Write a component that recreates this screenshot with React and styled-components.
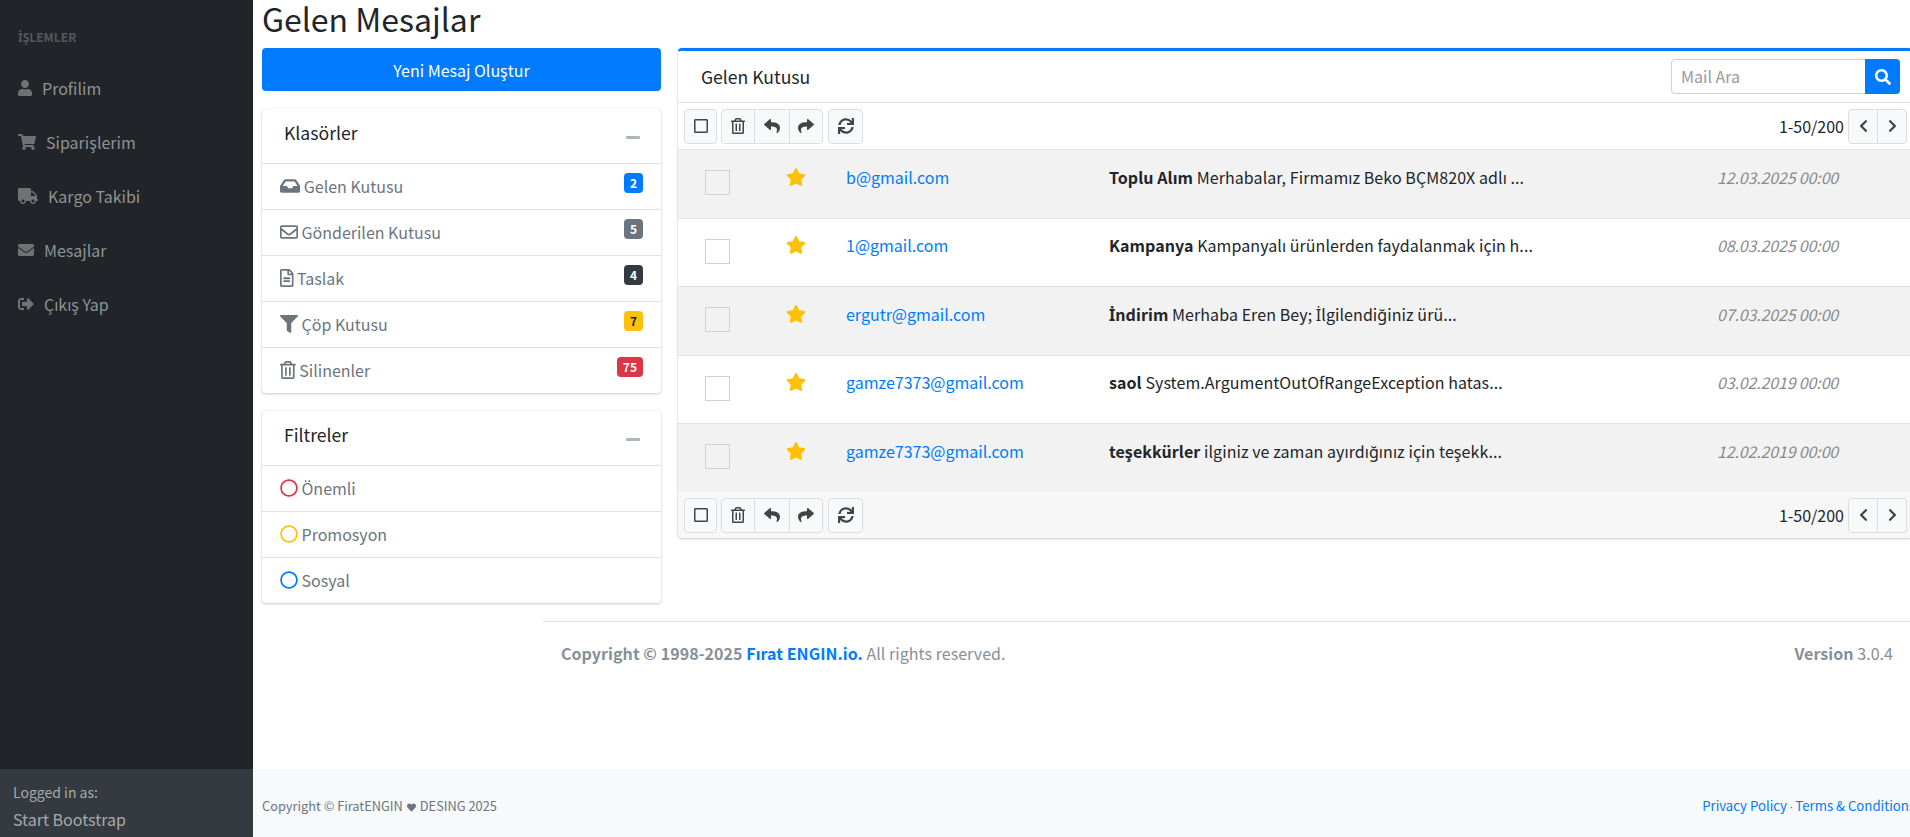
import React from 'react'
import styled, { createGlobalStyle } from 'styled-components'
import {
  FaUser, FaShoppingCart, FaTruck, FaEnvelope, FaSignOutAlt, FaInbox, FaRegEnvelope,
  FaRegFileAlt, FaFilter, FaRegTrashAlt, FaRegCircle, FaRegSquare, FaReply, FaShare,
  FaSync, FaChevronLeft, FaChevronRight, FaSearch, FaStar, FaHeart
} from 'react-icons/fa'

const GlobalStyle = createGlobalStyle`
  html, body { margin: 0; padding: 0; height: 100%; overflow: hidden; background: #fff; }
  body { font-family: "Noto Sans CJK SC", "Noto Sans", sans-serif; font-size: 16px; line-height: 24px; color: #212529; }
  * { box-sizing: border-box; }
`

const Page = styled.div`display: flex; width: 1910px; height: 837px; overflow: hidden;`

// react-icons forces 1em square, so each icon gets its real box here
const IconSlot = styled.span`
  display: inline-flex;
  flex: none;
  svg { width: ${p => p.$w}px; height: ${p => p.$h || 16}px; }
`

const Sidebar = styled.aside`
  width: 253px;
  flex: none;
  display: flex;
  flex-direction: column;
  background: #212529;
`
const SideNav = styled.nav`flex: 1; padding-top: 28px;`
const SideHeading = styled.div`
  padding-left: 18px;
  height: 18px;
  line-height: 18px;
  font-size: 12px;
  font-weight: 700;
  color: #55585c;
`
const SideLink = styled.a`
  display: flex;
  align-items: center;
  gap: 10px;
  height: 54px;
  padding-left: 18px;
  font-size: 16px;
  color: #909294;
  &:first-of-type { margin-top: 15px; }
  svg { color: #6f7173; }
`
const SideFooter = styled.div`
  height: 68px;
  flex: none;
  padding: 12px 13px 0;
  background: #343a40;
  color: #a6a9ab;
  font-size: 14px;
  line-height: 22px;
`
const SideUser = styled.div`font-size: 16px; line-height: 26px; margin-top: 3px;`

const Main = styled.div`flex: 1; min-width: 0; display: flex; flex-direction: column;`
const Content = styled.main`flex: 1; padding-left: 9px; min-height: 0;`
const Title = styled.h1`
  margin: 0;
  height: 48px;
  font-size: 32px;
  line-height: 36px;
  font-weight: 400;
  color: #212529;
  white-space: nowrap;
`
const Columns = styled.div`display: flex; gap: 17px; margin-right: -2px;`
const LeftColumn = styled.div`width: 399px; flex: none; display: flex; flex-direction: column;`
const ComposeButton = styled.button`
  height: 43px;
  border: 0;
  border-radius: 4px;
  background: #007bff;
  color: #fff;
  font: inherit;
  margin-bottom: 18px;
`
const Card = styled.section`
  background: #fff;
  border-radius: 4px;
  box-shadow: 0 0 1px rgba(0, 0, 0, .125), 0 1px 3px rgba(0, 0, 0, .2);
  margin-bottom: 18px;
`
const CardHeader = styled.header`
  height: 54px;
  display: flex;
  justify-content: space-between;
  padding: 12px 21px 0 22px;
  font-size: 17.6px;
  line-height: 24px;
`
const MinusMark = styled.span`
  width: 14px;
  height: 3px;
  margin-top: 15px;
  border-radius: 1px;
  background: #adb5bd;
`
const FolderRow = styled.a`
  position: relative;
  display: flex;
  align-items: center;
  gap: 3.5px;
  height: 46px;
  padding: 0 0 2px 18px;
  border-top: 1px solid #dee2e6;
  color: #6c757d;
`
const Badge = styled.span`
  position: absolute;
  right: 18px;
  top: 9px;
  min-width: 18px;
  height: 20px;
  padding: 0 6px;
  border-radius: 4px;
  background: ${p => p.$bg};
  color: ${p => p.$fg || '#fff'};
  font-size: 12px;
  line-height: 19px;
  font-weight: 700;
  text-align: center;
`
const CircleMark = styled(IconSlot)`color: ${p => p.$color};`

const Mailbox = styled(Card)`
  flex: 1;
  min-width: 0;
  border-top: 3px solid #007bff;
  margin: 0;
  align-self: flex-start;
`
const MailHeader = styled.header`
  height: 51px;
  display: flex;
  align-items: center;
  justify-content: space-between;
  padding: 0 12px 0 23px;
  font-size: 17.6px;
`
const SearchBox = styled.form`display: flex; height: 35px; margin: 0;`
const SearchInput = styled.input`
  width: 194px;
  height: 35px;
  padding: 0 9px 2px;
  border: 1px solid #ced4da;
  border-right: 0;
  border-radius: 4px 0 0 4px;
  font: inherit;
  font-size: 16px;
  outline: none;
  &::placeholder { color: #999; }
`
const SearchButton = styled.button`
  width: 35px;
  border: 0;
  border-radius: 0 4px 4px 0;
  background: #007bff;
  color: #fff;
  display: flex;
  align-items: center;
  justify-content: center;
`
const Toolbar = styled.div`
  height: ${p => p.$bottom ? '46px' : '47px'};
  display: flex;
  align-items: center;
  gap: 4px;
  padding: 0 5px 0 6px;
  border-top: ${p => p.$bottom ? '0' : '1px solid #dee2e6'};
  background: ${p => p.$bottom ? '#f7f7f8' : '#fff'};
  border-radius: ${p => p.$bottom ? '0 0 4px 4px' : '0'};
`
const ToolGroup = styled.div`display: flex; margin-left: ${p => p.$push || 0}px;`
const ToolButton = styled.button`
  width: ${p => p.$w || 34}px;
  height: 35px;
  padding: 0;
  display: flex;
  align-items: center;
  justify-content: center;
  background: #f8f9fa;
  border: 1px solid #ddd;
  color: #444;
  border-radius: 4px;
  & + & { margin-left: -1px; }
  ${ToolGroup} > &:not(:last-child) { border-top-right-radius: 0; border-bottom-right-radius: 0; }
  ${ToolGroup} > &:not(:first-child) { border-top-left-radius: 0; border-bottom-left-radius: 0; }
`
const Pager = styled.div`display: flex; align-items: center; gap: 4px; margin-left: auto;`

const RowCell = styled.div`padding-top: 15px; white-space: nowrap;`
const MailRow = styled.div`
  height: ${p => p.$odd ? 69 : 68}px;
  display: grid;
  grid-template-columns: 80.5px 60.5px 263px 609px 1fr;
  padding-left: 27px;
  border-top: 1px solid #dee2e6;
  background: ${p => p.$odd ? '#f2f2f2' : '#fff'};
  ${RowCell} { margin-top: ${p => p.$odd ? 0 : -1}px; }
`
const RowCheck = styled.span`
  width: 25px;
  height: 25px;
  margin-top: 20px;
  border: 1px solid #d5d0c8;
  background: ${p => p.$odd ? '#f2f2f2' : '#fff'};
`
const StarCell = styled(RowCell)`
  padding-top: 18px;
  color: #ffc107;
  line-height: 18px;
`
const MailLink = styled.a`color: #007bff;`
const Subject = styled(RowCell)`color: #212529; letter-spacing: .07px;`
const DateCell = styled(RowCell)`color: #8a8a8a; font-style: italic; letter-spacing: -.15px; margin-left: -1px;`
const DottedI = styled.span`font-family: "Noto Sans", sans-serif;`

const MainFooter = styled.footer`
  margin-left: 281px;
  border-top: 1px solid #dee2e6;
  display: flex;
  justify-content: space-between;
  padding: 19px 17px 0 18px;
  color: #869099;
  letter-spacing: .05px;
  b { font-weight: 700; }
`
const FooterLink = styled.a`color: #007bff; font-weight: 700;`

const PageFooter = styled.footer`
  height: 68px;
  flex: none;
  display: flex;
  align-items: center;
  justify-content: space-between;
  padding: 6px 0 0 9px;
  background: #f8f9fa;
  font-size: 12.8px;
  color: #6c757d;
  white-space: nowrap;
`
const HeartMark = styled.span`
  margin: 0 4px;
  svg { width: 9px; height: 9px; vertical-align: -1px; }
`
const LegalLinks = styled.div`
  margin-right: -5px;
  font-size: 13.2px;
  word-spacing: -1px;
  a { color: #007bff; word-spacing: 0; }
`
const Dot = styled.span`font-family: "Liberation Sans", sans-serif;`

const navItems = [
  { icon: FaUser, label: 'Profilim', w: 14 },
  { icon: FaShoppingCart, label: 'Siparişlerim', w: 18 },
  { icon: FaTruck, label: 'Kargo Takibi', w: 20 },
  { icon: FaEnvelope, label: 'Mesajlar', w: 16 },
  { icon: FaSignOutAlt, label: 'Çıkış Yap', w: 16 }
]
const folders = [
  { icon: FaInbox, label: 'Gelen Kutusu', count: 2, bg: '#007bff', w: 20.25 },
  { icon: FaRegEnvelope, label: 'Gönderilen Kutusu', count: 5, bg: '#6c757d', w: 18 },
  { icon: FaRegFileAlt, label: 'Taslak', count: 4, bg: '#343a40', w: 13.5 },
  { icon: FaFilter, label: 'Çöp Kutusu', count: 7, bg: '#ffc107', fg: '#212529', w: 18 },
  { icon: FaRegTrashAlt, label: 'Silinenler', count: 75, bg: '#dc3545', w: 15.75 }
]
const filters = [
  { label: 'Önemli', color: '#dc3545' },
  { label: 'Promosyon', color: '#ffc107' },
  { label: 'Sosyal', color: '#007bff' }
]
const mails = [
  { from: 'b@gmail.com', subject: 'Toplu Alım', text: 'Merhabalar, Firmamız Beko BÇM820X adlı ...', date: '12.03.2025 00:00' },
  { from: '1@gmail.com', subject: 'Kampanya', text: 'Kampanyalı ürünlerden faydalanmak için h...', date: '08.03.2025 00:00' },
  { from: 'ergutr@gmail.com', subject: '\u0130ndirim', text: 'Merhaba Eren Bey; \u0130lgilendiğiniz ürü...', date: '07.03.2025 00:00' },
  { from: 'gamze7373@gmail.com', subject: 'saol', text: 'System.ArgumentOutOfRangeException hatas...', date: '03.02.2019 00:00' },
  { from: 'gamze7373@gmail.com', subject: 'teşekkürler', text: 'ilginiz ve zaman ayırdığınız için teşekk...', date: '12.02.2019 00:00' }
]

// the main font has no usable capital dotted I, it needs its own family
const dotted = text => text.split('\u0130').map((part, i) => (
  <React.Fragment key={i}>
    {i > 0 && <DottedI>{'\u0130'}</DottedI>}
    {part}
  </React.Fragment>
))

const MailToolbar = ({ bottom }) => (
  <Toolbar $bottom={bottom}>
    <ToolGroup><ToolButton $w={33}><IconSlot $w={14}><FaRegSquare /></IconSlot></ToolButton></ToolGroup>
    <ToolGroup>
      <ToolButton $w={34}><IconSlot $w={14}><FaRegTrashAlt /></IconSlot></ToolButton>
      <ToolButton $w={36}><IconSlot $w={16}><FaReply /></IconSlot></ToolButton>
      <ToolButton $w={34}><IconSlot $w={16}><FaShare /></IconSlot></ToolButton>
    </ToolGroup>
    <ToolGroup $push={1}><ToolButton $w={35}><IconSlot $w={16}><FaSync /></IconSlot></ToolButton></ToolGroup>
    <Pager>
      1-50/200
      <ToolGroup>
        <ToolButton $w={30}><IconSlot $w={9} $h={14}><FaChevronLeft /></IconSlot></ToolButton>
        <ToolButton $w={30}><IconSlot $w={9} $h={14}><FaChevronRight /></IconSlot></ToolButton>
      </ToolGroup>
    </Pager>
  </Toolbar>
)

export default function App() {
  return (
    <Page>
      <GlobalStyle />
      <Sidebar>
        <SideNav>
          <SideHeading>{dotted('\u0130\u015ELEMLER')}</SideHeading>
          {navItems.map(item => (
            <SideLink key={item.label}>
              <IconSlot $w={item.w}><item.icon /></IconSlot>
              {item.label}
            </SideLink>
          ))}
        </SideNav>
        <SideFooter>
          Logged in as:
          <SideUser>Start Bootstrap</SideUser>
        </SideFooter>
      </Sidebar>
      <Main>
        <Content>
          <Title>Gelen Mesajlar</Title>
          <Columns>
            <LeftColumn>
              <ComposeButton>Yeni Mesaj Oluştur</ComposeButton>
              <Card>
                <CardHeader>Klasörler<MinusMark /></CardHeader>
                {folders.map(f => (
                  <FolderRow key={f.label}>
                    <IconSlot $w={f.w} $h={18}><f.icon /></IconSlot>
                    {f.label}
                    <Badge $bg={f.bg} $fg={f.fg}>{f.count}</Badge>
                  </FolderRow>
                ))}
              </Card>
              <Card>
                <CardHeader>Filtreler<MinusMark /></CardHeader>
                {filters.map(f => (
                  <FolderRow key={f.label}>
                    <CircleMark $w={18} $h={18} $color={f.color}><FaRegCircle /></CircleMark>
                    {f.label}
                  </FolderRow>
                ))}
              </Card>
            </LeftColumn>
            <Mailbox>
              <MailHeader>
                Gelen Kutusu
                <SearchBox>
                  <SearchInput placeholder="Mail Ara" />
                  <SearchButton type="button"><IconSlot $w={16}><FaSearch /></IconSlot></SearchButton>
                </SearchBox>
              </MailHeader>
              <MailToolbar />
              {mails.map((m, i) => (
                <MailRow key={m.date} $odd={i % 2 === 0}>
                  <RowCheck $odd={i % 2 === 0} />
                  <StarCell><IconSlot $w={20} $h={18}><FaStar /></IconSlot></StarCell>
                  <RowCell><MailLink>{m.from}</MailLink></RowCell>
                  <Subject><b>{dotted(m.subject)}</b> {dotted(m.text)}</Subject>
                  <DateCell>{m.date}</DateCell>
                </MailRow>
              ))}
              <MailToolbar bottom />
            </Mailbox>
          </Columns>
          <MainFooter>
            <span><b>Copyright © 1998-2025 <FooterLink>Fırat ENGIN.io.</FooterLink></b> All rights reserved.</span>
            <span><b>Version</b> 3.0.4</span>
          </MainFooter>
        </Content>
        <PageFooter>
          <span>Copyright © FiratENGIN<HeartMark><FaHeart /></HeartMark>DESING 2025</span>
          <LegalLinks><a>Privacy Policy</a> <Dot>·</Dot> <a>Terms &amp; Conditions</a></LegalLinks>
        </PageFooter>
      </Main>
    </Page>
  )
}
